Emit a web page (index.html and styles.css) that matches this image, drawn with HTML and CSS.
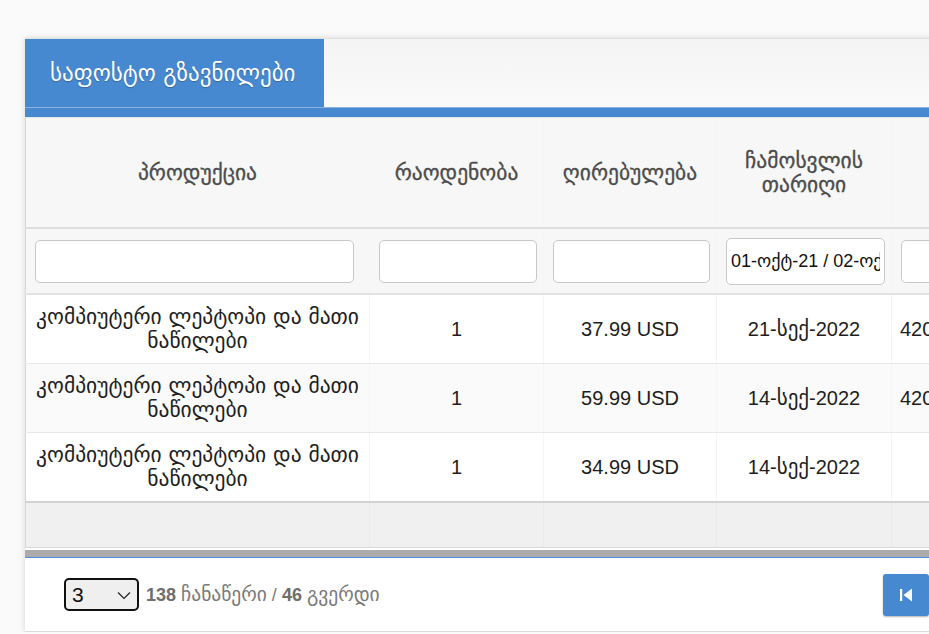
FILE: index.html
```html
<!DOCTYPE html>
<html lang="ka">
<head>
    <meta charset="UTF-8">
    <meta name="viewport" content="width=device-width, initial-scale=1.0">
    <title>საფოსტო გზავნილები</title>
    <link rel="stylesheet" href="styles.css">
</head>
<body>
    <div class="page-title">ყველა გზავნილი და ამანათები</div>

    <div class="panel">
        <!-- Tabs -->
        <div class="tabs">
            <div class="tab active">საფოსტო გზავნილები</div>
        </div>
        <div class="tab-bar"></div>

        <!-- Table -->
        <table class="grid">
            <colgroup>
                <col class="c-product">
                <col class="c-qty">
                <col class="c-price">
                <col class="c-date">
                <col class="c-code">
                <col>
            </colgroup>
            <thead>
                <tr class="head-row">
                    <th>პროდუქცია</th>
                    <th>რაოდენობა</th>
                    <th>ღირებულება</th>
                    <th>ჩამოსვლის თარიღი</th>
                    <th>თრექინგ კოდი</th>
                    <th>სტატუსი</th>
                </tr>
                <tr class="filter-row">
                    <td class="first"><input type="text"></td>
                    <td><input type="text"></td>
                    <td><input type="text"></td>
                    <td><input type="text" class="date-input" value="01-ოქტ-21 / 02-ოქტ-22"></td>
                    <td><input type="text"></td>
                    <td><input type="text"></td>
                </tr>
            </thead>
            <tbody>
                <tr>
                    <td class="ka">კომპიუტერი ლეპტოპი და მათი ნაწილები</td>
                    <td>1</td>
                    <td>37.99 USD</td>
                    <td>21-<span class="ka">სექ</span>-2022</td>
                    <td class="left">420351098432</td>
                    <td></td>
                </tr>
                <tr class="alt">
                    <td class="ka">კომპიუტერი ლეპტოპი და მათი ნაწილები</td>
                    <td>1</td>
                    <td>59.99 USD</td>
                    <td>14-<span class="ka">სექ</span>-2022</td>
                    <td class="left">420351098401</td>
                    <td></td>
                </tr>
                <tr class="last">
                    <td class="ka">კომპიუტერი ლეპტოპი და მათი ნაწილები</td>
                    <td>1</td>
                    <td>34.99 USD</td>
                    <td>14-<span class="ka">სექ</span>-2022</td>
                    <td class="left"></td>
                    <td></td>
                </tr>
            </tbody>
            <tfoot>
                <tr class="foot-row">
                    <td></td><td></td><td></td><td></td><td></td><td></td>
                </tr>
            </tfoot>
        </table>
        <div class="scroll-bar"></div>

        <!-- Pager -->
        <div class="pager">
            <div class="pager-info">
                <span class="page-size">
                    <select>
                        <option>3</option>
                        <option>10</option>
                        <option>25</option>
                    </select>
                    <svg class="chevron" width="14" height="9" viewBox="0 0 14 9"><path d="M1 1.5 L7 7.5 L13 1.5" fill="none" stroke="#222" stroke-width="1.2"/></svg>
                </span>
                <span class="count"><b>138</b> <span class="ka">ჩანაწერი</span> / <b>46</b> <span class="ka">გვერდი</span></span>
            </div>
            <div class="pager-nav">
                <button class="nav-btn"><svg width="18" height="18" viewBox="0 0 18 18"><rect x="3" y="3" width="2.2" height="12" fill="#fff"/><path d="M15 2.5 L15 15.5 L6.5 9 Z" fill="#fff"/></svg></button>
                <button class="nav-btn"><svg width="18" height="18" viewBox="0 0 18 18"><path d="M13 2.5 L13 15.5 L4.5 9 Z" fill="#fff"/></svg></button>
                <button class="nav-btn page">1</button>
                <button class="nav-btn"><svg width="18" height="18" viewBox="0 0 18 18"><path d="M5 2.5 L5 15.5 L13.5 9 Z" fill="#fff"/></svg></button>
                <button class="nav-btn"><svg width="18" height="18" viewBox="0 0 18 18"><path d="M3 2.5 L3 15.5 L11.5 9 Z" fill="#fff"/><rect x="12.8" y="3" width="2.2" height="12" fill="#fff"/></svg></button>
            </div>
        </div>
    </div>
</body>
</html>
```

FILE: styles.css
```css
/* Estilos gerais */
body {
    margin: 0;
    background-color: #fafafa;
    font-family: "Liberation Sans", "DejaVu Sans", sans-serif;
    color: #222;
    overflow: hidden;
}

.ka {
    font-family: "DejaVu Sans", sans-serif;
}

.page-title {
    margin: -25px 0 0 18px;
    font-family: "DejaVu Sans", sans-serif;
    font-size: 22px;
    line-height: 26px;
    color: #a8a8a8;
    white-space: nowrap;
}

.panel {
    margin: 37px 0 0 25px;
    width: 1200px;
    background: #fff;
    box-shadow: 0 0 6px rgba(0, 0, 0, 0.15);
}

/* Abas */
.tabs {
    display: flex;
    background: linear-gradient(#f4f4f4, #fafafa);
    border-top: 1px solid #e2e2e2;
}
.tab {
    width: 274px;
    height: 68px;
    padding-left: 25px;
    display: flex;
    align-items: center;
    font-family: "DejaVu Sans", sans-serif;
    font-size: 23px;
    color: #fff;
    text-shadow: 0 1px 1px rgba(0, 0, 0, 0.25);
}
.tab.active {
    background-color: #4689d1;
}
.tab-bar {
    height: 9px;
    background-color: #4689d1;
    border-top: 1px solid #8db2e1;
    border-bottom: 1px solid #dfe8e4;
}

/* Tabela */
.grid {
    width: 100%;
    border-collapse: collapse;
    table-layout: fixed;
    border-left: 1px solid #d8d8d8;
}
.c-product { width: 344px; }
.c-qty { width: 174px; }
.c-price { width: 173px; }
.c-date { width: 175px; }
.c-code { width: 230px; }

.grid th,
.grid td {
    border-right: 1px solid #f5f5f5;
    text-align: center;
    padding: 0 8px;
}

.head-row th {
    height: 109px;
    background-color: #f7f7f7;
    font-family: "DejaVu Sans", sans-serif;
    font-weight: normal;
    font-size: 21.5px;
    line-height: 24px;
    color: #4c4c4c;
    border-bottom: 2px solid #dedede;
    -webkit-text-stroke: 0.3px #4c4c4c;
}

.filter-row td {
    height: 64px;
    padding: 0 6px 0 9px;
    background-color: #f7f7f7;
    border-bottom: 2px solid #e2e2e2;
}
.filter-row td.first {
    padding-right: 15px;
}
.filter-row input {
    box-sizing: border-box;
    width: 100%;
    height: 43px;
    border: 1px solid #c8c8c8;
    border-radius: 5px;
    background: #fff;
    padding: 0 4px;
    font-family: "Liberation Sans", "DejaVu Sans", sans-serif;
    font-size: 18px;
    color: #111;
    outline: none;
}
.filter-row input.date-input {
    height: 47px;
}

.grid tbody td {
    height: 68px;
    font-size: 20px;
    line-height: 24px;
    color: #1e1e1e;
    border-bottom: 1px solid #e8e8e8;
}
.grid tbody td.ka {
    font-size: 21.5px;
    padding: 0 6px;
}
.grid tbody td span.ka {
    font-size: 21px;
}
.grid tbody td.left {
    text-align: left;
    padding-left: 8px;
}
.grid tbody tr.alt td {
    background-color: #fafafa;
}
.grid tbody tr.last td {
    border-bottom: 2px solid #d2d2d2;
}

.foot-row td {
    height: 44px;
    background-color: #f0f0f0;
    border-bottom: 1px solid #d8d8d8;
    border-right: 1px solid #eaeaea;
}

.scroll-bar {
    height: 7px;
    margin-top: 2px;
    background-color: #ababab;
    border-bottom: 1px solid #4a90e2;
}

/* Paginação */
.pager {
    height: 73px;
    display: flex;
    align-items: center;
    justify-content: space-between;
    padding: 0 96px 0 39px;
    border-bottom: 1px solid #dcdcdc;
}
.pager-info {
    display: flex;
    align-items: center;
    gap: 7px;
}
.page-size {
    position: relative;
    display: inline-block;
}
.page-size select {
    appearance: none;
    -webkit-appearance: none;
    width: 75px;
    height: 33px;
    border: 2px solid #111;
    border-radius: 5px;
    background-color: #efefef;
    padding: 0 0 0 6px;
    font-family: "Liberation Sans", sans-serif;
    font-size: 21px;
    color: #111;
}
.chevron {
    position: absolute;
    right: 8px;
    top: 13px;
    pointer-events: none;
}
.count {
    font-size: 18px;
    color: #7a7a7a;
}
.count .ka {
    font-size: 19.5px;
}
.count b {
    color: #6e6e6e;
}

.pager-nav {
    display: flex;
    gap: 4px;
}
.nav-btn {
    width: 46px;
    height: 42px;
    border: none;
    border-radius: 3px;
    background-color: #4689d1;
    box-shadow: 0 1px 2px rgba(0, 0, 0, 0.3);
    color: #fff;
    font-size: 17px;
    display: flex;
    align-items: center;
    justify-content: center;
    cursor: pointer;
}
```
